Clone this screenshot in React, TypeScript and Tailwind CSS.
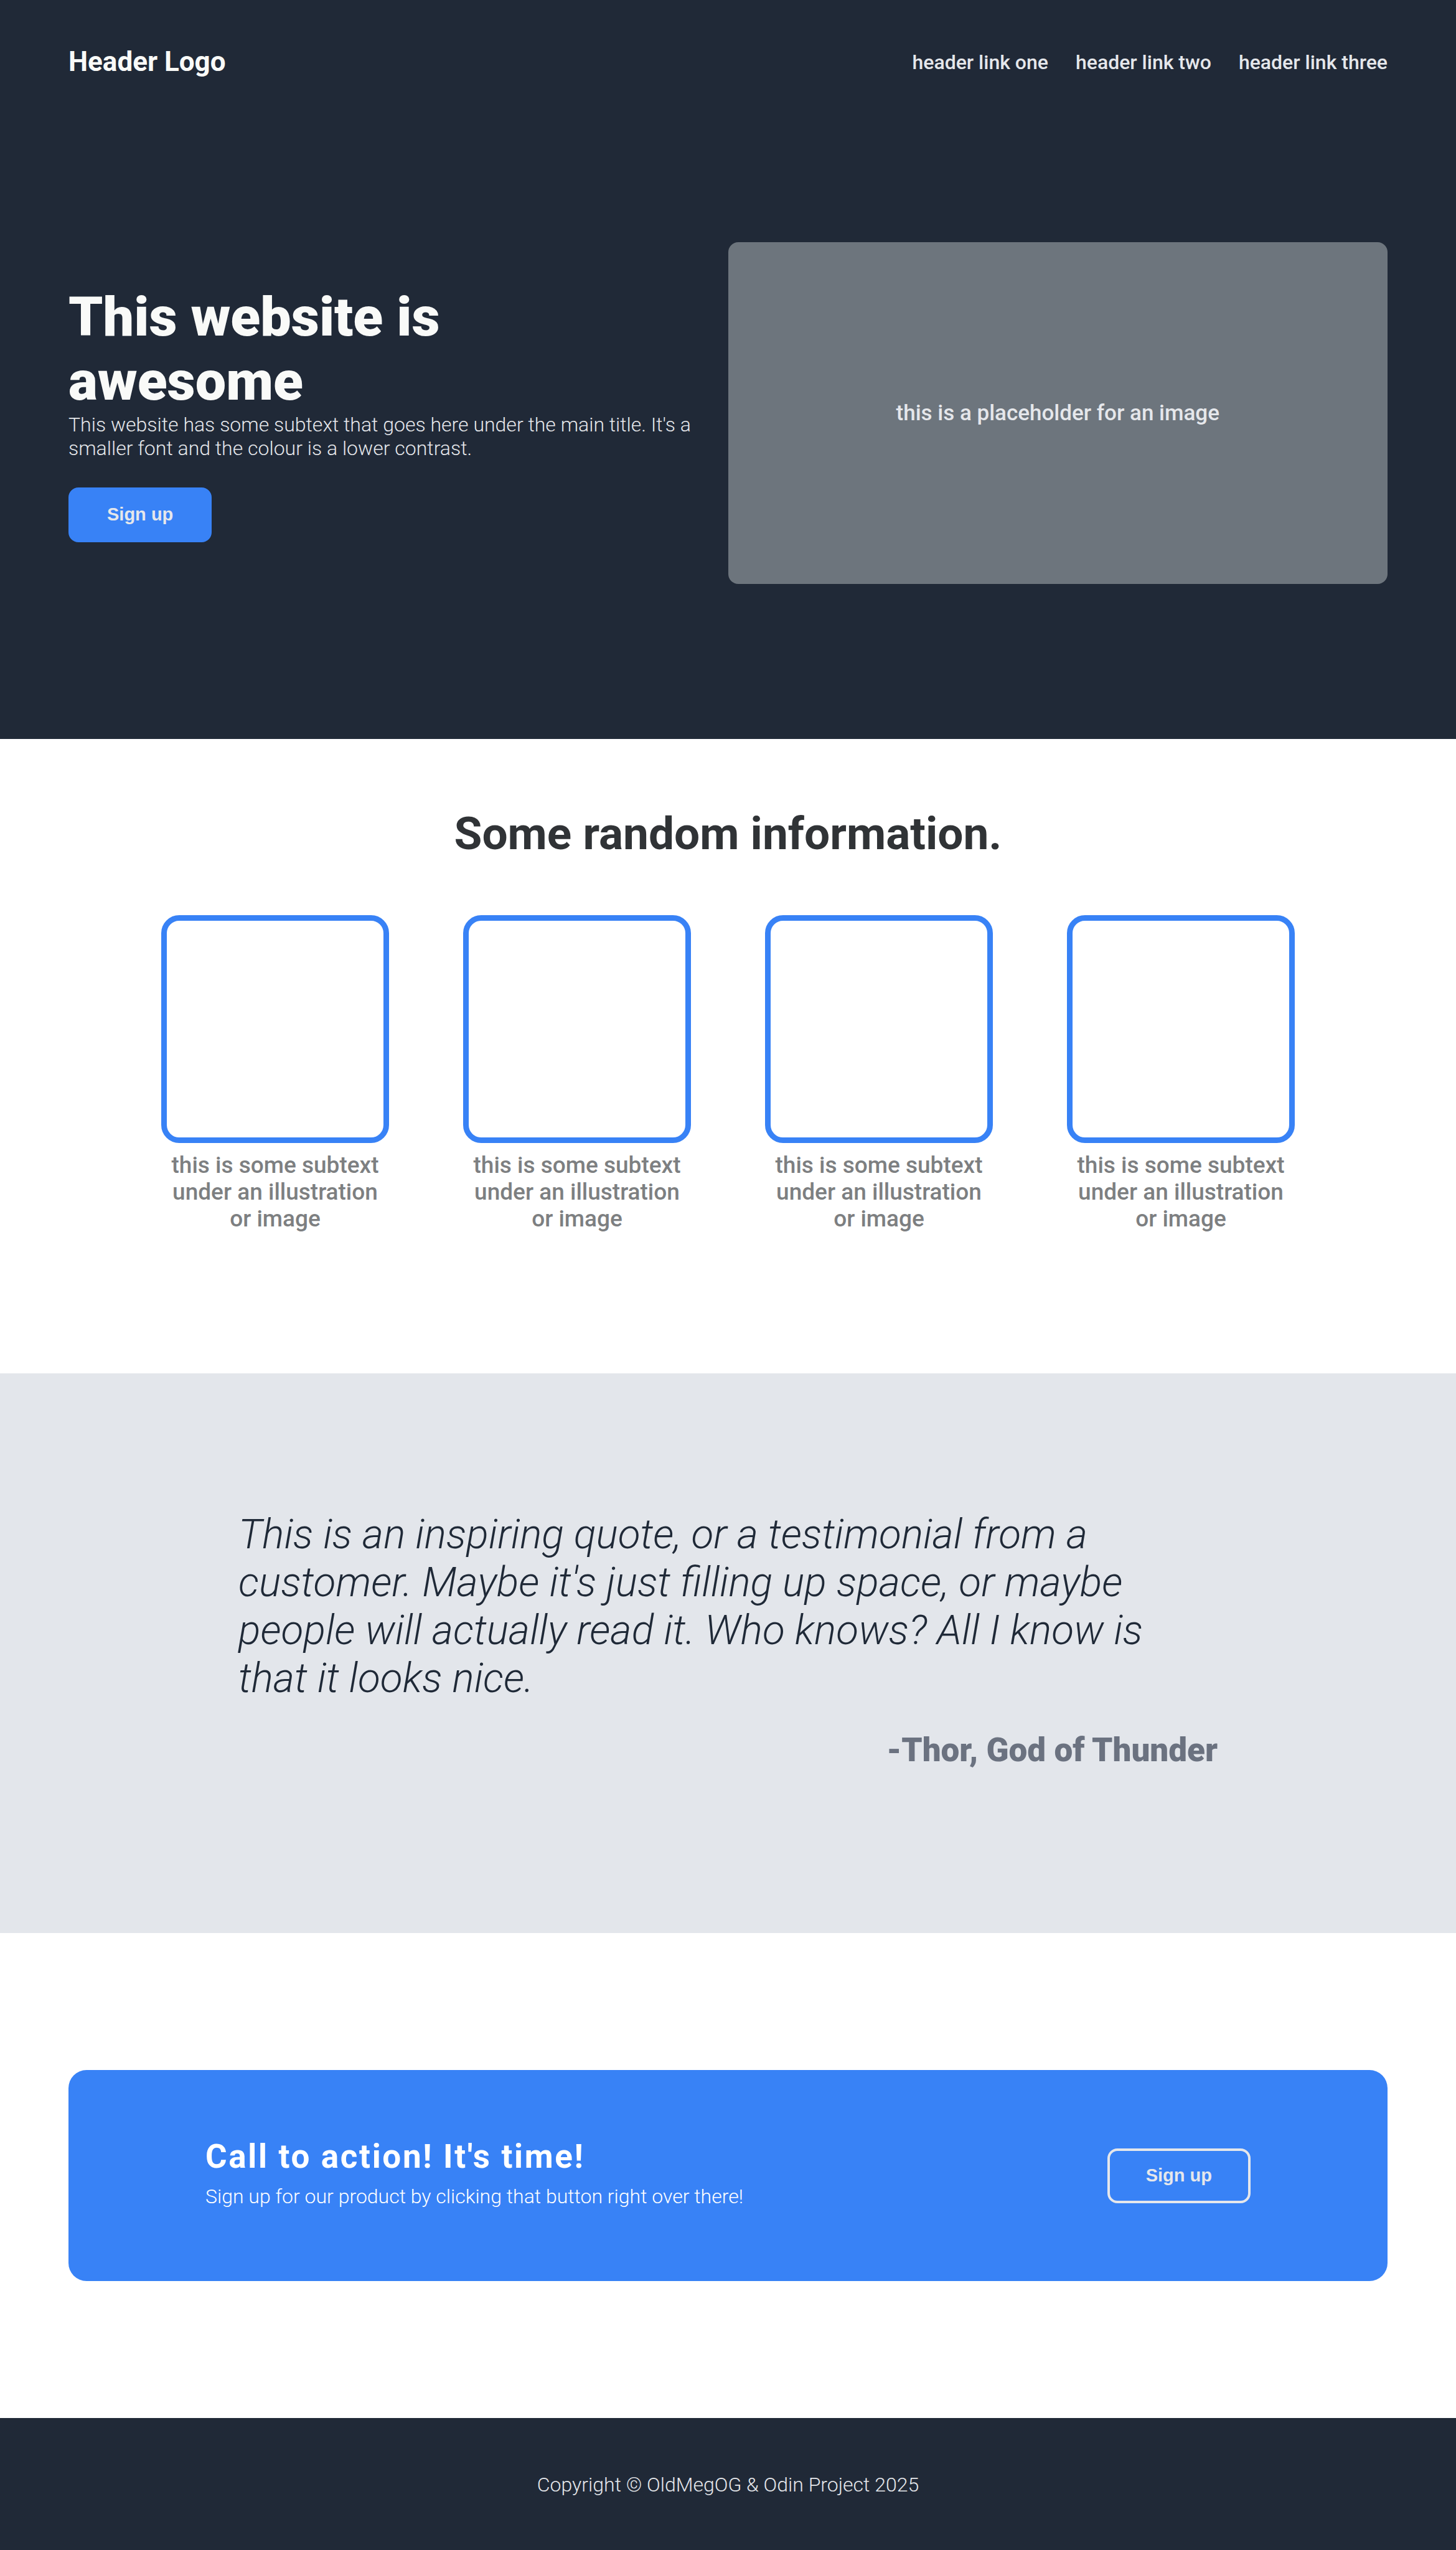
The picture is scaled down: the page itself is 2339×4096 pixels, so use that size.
const navLinks = ["header link one", "header link two", "header link three"];
const cards = [1, 2, 3, 4];

function SignUpButton({ outlined = false }: { outlined?: boolean }) {
  return (
    <button
      type="button"
      className={
        outlined
          ? "flex h-[88px] shrink-0 items-center rounded-2xl border-4 border-gray-200 bg-[#3882f6] px-[58px] font-['Liberation_Sans',sans-serif] text-[29px] font-bold text-gray-200"
          : "flex h-[88px] shrink-0 items-center rounded-2xl border-4 border-[#3882f6] bg-[#3882f6] px-[58px] font-['Liberation_Sans',sans-serif] text-[29px] font-bold text-gray-200"
      }
    >
      Sign up
    </button>
  );
}

export default function App() {
  return (
    <div className="bg-white font-[Roboto,sans-serif]">
      <div className="bg-[#202937] px-[110px] pt-[74px] pb-[249px]">
        <header className="flex items-center justify-between">
          <div className="text-[44px] leading-[51px] font-bold text-[#f9faf8]">Header Logo</div>
          <nav>
            <ul className="flex gap-11 text-[32px] leading-[38px] font-medium text-gray-200">
              {navLinks.map((label) => (
                <li key={label}>
                  <a href="#">{label}</a>
                </li>
              ))}
            </ul>
          </nav>
        </header>
        <section className="mt-[264px] grid grid-cols-2 items-center">
          <div className="flex flex-col items-start">
            <h1 className="max-w-[800px] text-[88px] leading-[103px] font-black text-[#f9faf8]">
              This website is awesome
            </h1>
            <p className="pr-11 text-[32px] leading-[38px] font-light text-gray-200">
              This website has some subtext that goes here under the main title. It's a smaller font and
              the colour is a lower contrast.
            </p>
            <div className="mt-11">
              <SignUpButton />
            </div>
          </div>
          <div className="flex h-[549px] items-center justify-center rounded-2xl bg-[#6d757d] text-[35px] leading-[43px] font-medium text-gray-200">
            this is a placeholder for an image
          </div>
        </section>
      </div>

      <section className="flex flex-col items-center pt-[109px] pb-[227px]">
        <h2 className="text-[73px] leading-[86px] font-bold text-[#303336]">Some random information.</h2>
        <div className="mt-[88px] flex gap-[119px]">
          {cards.map((card) => (
            <figure key={card} className="w-[366px]">
              <div className="h-[366px] rounded-[29px] border-[9px] border-[#3882f6]" />
              <figcaption className="mt-[14px] text-center text-[37px] leading-[43px] font-medium text-[#7d7f81]">
                this is some subtext under an illustration or image
              </figcaption>
            </figure>
          ))}
        </div>
      </section>

      <section className="bg-[#e3e6eb] px-[383px] pt-[220px] pb-[264px]">
        <blockquote className="text-[66px] leading-[77px] font-light text-[#1f2937] italic">
          This is an inspiring quote, or a testimonial from a customer. Maybe it's just filling up space,
          or maybe people will actually read it. Who knows? All I know is that it looks nice.
        </blockquote>
        <p className="mt-[47px] text-right text-[53px] leading-[60px] font-black text-[#6b7280]">
          -Thor, God of Thunder
        </p>
      </section>

      <section className="px-[110px] py-[220px]">
        <div className="flex items-center justify-between rounded-[29px] bg-[#3882f6] px-[220px] py-[109px]">
          <div className="pb-2">
            <h2 className="text-[53px] leading-[60px] font-bold tracking-wider text-white">
              Call to action! It's time!
            </h2>
            <p className="mt-[15px] text-[32px] leading-[38px] font-light text-white">
              Sign up for our product by clicking that button right over there!
            </p>
          </div>
          <SignUpButton outlined />
        </div>
      </section>

      <footer className="bg-[#202937] py-[88px] text-center text-[32px] leading-[38px] font-light text-gray-200">
        Copyright © OldMegOG &amp; Odin Project 2025
      </footer>
    </div>
  );
}
